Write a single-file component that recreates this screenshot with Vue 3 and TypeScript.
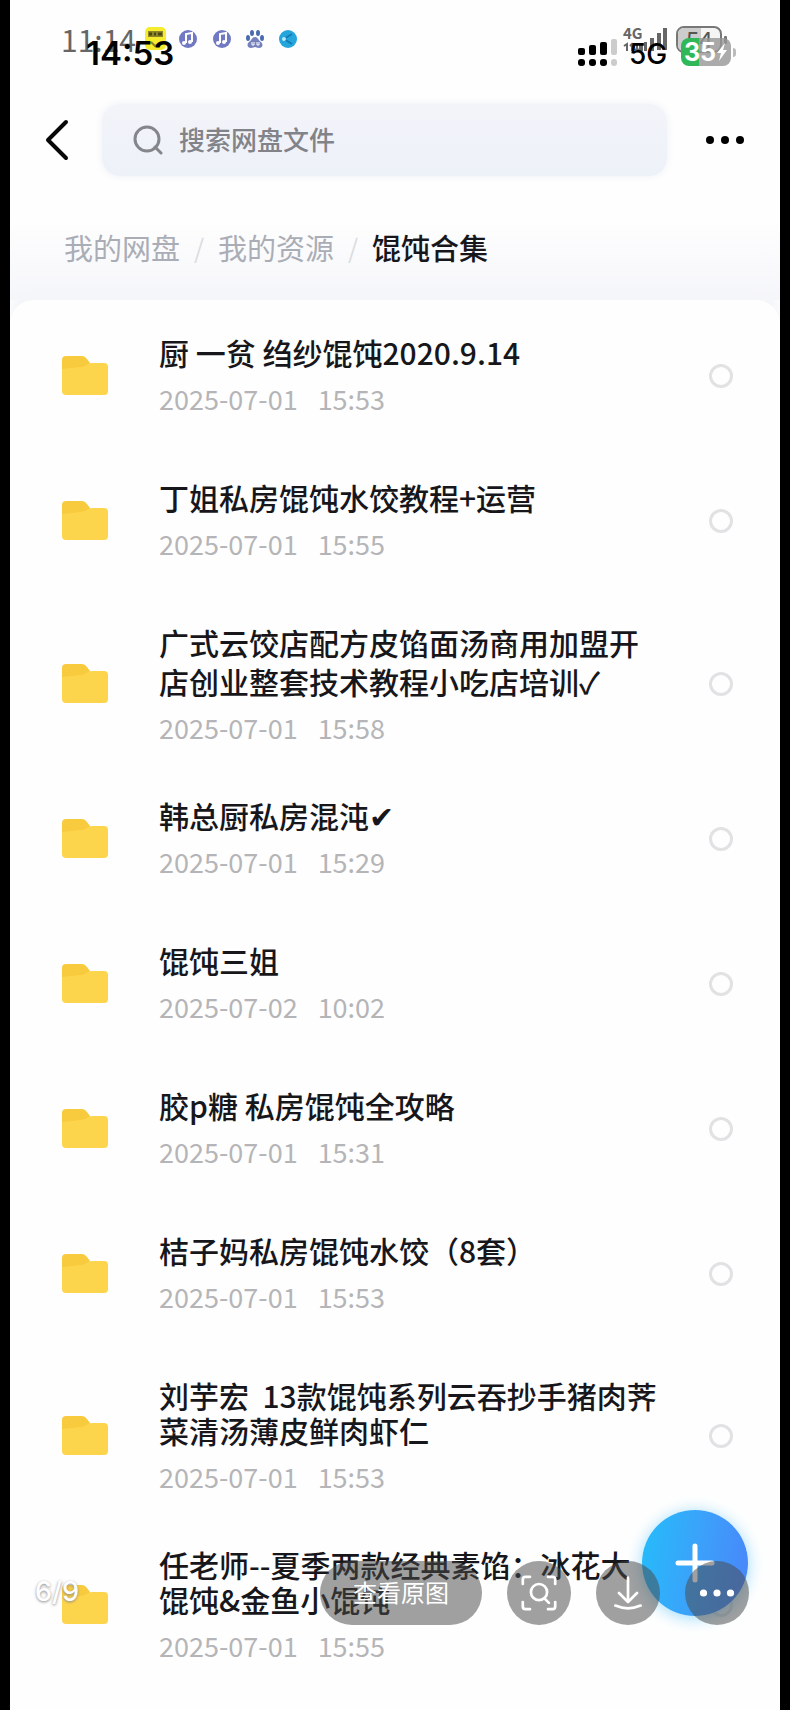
<script setup lang="ts">
import { ref } from 'vue'

interface Folder {
  lines: string[]
  date: string
  time: string
  variant: 'single' | 'tall' | 'tight'
}

const folders: Folder[] = [
  { lines: ['厨 一贫 绉纱馄饨2020.9.14'], date: '2025-07-01', time: '15:53', variant: 'single' },
  { lines: ['丁姐私房馄饨水饺教程+运营'], date: '2025-07-01', time: '15:55', variant: 'single' },
  { lines: ['广式云饺店配方皮馅面汤商用加盟开', '店创业整套技术教程小吃店培训✓'], date: '2025-07-01', time: '15:58', variant: 'tall' },
  { lines: ['韩总厨私房混沌✔'], date: '2025-07-01', time: '15:29', variant: 'single' },
  { lines: ['馄饨三姐'], date: '2025-07-02', time: '10:02', variant: 'single' },
  { lines: ['胶p糖 私房馄饨全攻略'], date: '2025-07-01', time: '15:31', variant: 'single' },
  { lines: ['桔子妈私房馄饨水饺（8套）'], date: '2025-07-01', time: '15:53', variant: 'single' },
  { lines: ['刘芋宏  13款馄饨系列云吞抄手猪肉荠', '菜清汤薄皮鲜肉虾仁'], date: '2025-07-01', time: '15:53', variant: 'tight' },
  { lines: ['任老师--夏季两款经典素馅：冰花大', '馄饨&金鱼小馄饨'], date: '2025-07-01', time: '15:55', variant: 'tight' },
]
const selected = ref<number[]>([])
const query = ref('')
</script>

<template>
  <div class="page">
    <div class="status">
      <div class="status-left">
        <span class="old-time">11:14</span>
        <svg class="app-icons" viewBox="0 0 160 28" aria-hidden="true">
          <rect x="2" y="2" width="21" height="23" rx="5" fill="#f4ec2c" />
          <path d="M5 6h15v6H5z" fill="#8d8428" />
          <path d="M6 9h3m2 0h2m2 0h4" stroke="#4d4914" stroke-width="3" fill="none" />
          <path d="M8 17l4 4 6-4" stroke="#8a8227" stroke-width="2" fill="none" />
          <g v-for="x in [45, 79]" :key="x">
            <circle :cx="x" cy="14" r="9" fill="#7178c4" />
            <path :d="`M${x - 2} 18V9l6-1v9`" stroke="#fff" stroke-width="2" fill="none" />
            <circle :cx="x - 4" cy="18" r="2" fill="#fff" />
            <circle :cx="x + 2" cy="17" r="2" fill="#fff" />
          </g>
          <g fill="#4a6cae">
            <ellipse cx="105" cy="13" rx="2" ry="3" />
            <ellipse cx="109" cy="8" rx="2" ry="3" />
            <ellipse cx="115" cy="8" rx="2" ry="3" />
            <ellipse cx="119" cy="13" rx="2" ry="3" />
            <path d="M112 12c3 0 3 3 6 5 3 3 1 6-2 6-2 0-3-1-4-1s-2 1-4 1c-3 0-5-3-2-6 3-2 3-5 6-5z" fill="#7580bd" />
            <path d="M109 17v3h2v-3m3 0v3h2v-3" stroke="#fff" fill="none" />
          </g>
          <circle cx="145" cy="14" r="9" fill="#24a5dc" />
          <path d="M149 9l-8 5 8 5" stroke="#127cb5" stroke-width="2" fill="none" />
          <circle cx="141" cy="14" r="2" fill="#b8eafa" />
        </svg>
      </div>
      <span class="new-time">14:53</span>
      <div class="signals">
        <svg class="signal-art" viewBox="0 0 180 60" aria-hidden="true">
          <g fill="#666">
            <rect x="69" y="29" width="4" height="7" />
            <rect x="74" y="27" width="3" height="9" />
            <rect x="80" y="23" width="4" height="13" />
            <rect x="87" y="18" width="4" height="17" />
            <rect x="93" y="13" width="4" height="22" />
            <path d="M54 31l3-2v7m5-7v7m-2-5l2-2 2 2m3-2v7m-2-2l2 2 2-2" stroke="#666" stroke-width="2" fill="none" />
          </g>
          <rect x="107" y="12" width="44" height="25" rx="7" fill="#f4f4f4" stroke="#777" stroke-width="2" />
          <path d="M114 13h17v23h-17q-6 0-6-6V19q0-6 6-6z" fill="#ccc" />
          <rect x="154" y="21" width="3" height="8" rx="1" fill="#777" />
          <g fill="#000">
            <rect x="8" y="33" width="7" height="7" rx="2" />
            <rect x="19" y="30" width="7" height="10" rx="2" />
            <rect x="30" y="27" width="7" height="13" rx="2" />
            <rect x="8" y="44" width="7" height="7" rx="3" />
            <rect x="19" y="44" width="7" height="7" rx="3" />
            <rect x="30" y="44" width="7" height="7" rx="3" />
          </g>
          <rect x="41" y="24" width="6" height="16" rx="2" fill="#ccc" />
          <rect x="41" y="44" width="6" height="7" rx="3" fill="#ccc" />
        </svg>
        <span class="net-old">4G</span>
        <span class="charge-old">54</span>
        <span class="net-new">5G</span>
        <span class="battery">
          <span>35</span>
          <svg viewBox="0 0 12 20" aria-hidden="true"><path d="M9 1L1 11h4l-2 8 8-11H7z" fill="#fff" /></svg>
        </span>
      </div>
    </div>

    <header class="top">
      <button class="plain back" aria-label="返回">
        <svg viewBox="0 0 24 42"><path d="M21 3L3 21l18 18" fill="none" stroke="#080808" stroke-width="4" stroke-linecap="round" stroke-linejoin="round" /></svg>
      </button>
      <label class="search">
        <svg viewBox="0 0 30 30" aria-hidden="true"><circle cx="14" cy="14" r="12" /><path d="M22 22l6 6" /></svg>
        <input v-model="query" type="text" placeholder="搜索网盘文件" aria-label="搜索网盘文件">
      </label>
      <button class="plain more" aria-label="更多">
        <svg viewBox="0 0 40 10"><circle cx="5" cy="5" r="4" /><circle cx="20" cy="5" r="4" /><circle cx="35" cy="5" r="4" /></svg>
      </button>
    </header>

    <nav class="crumbs">
      <a href="#">我的网盘</a><i>/</i><a href="#">我的资源</a><i>/</i><span>馄饨合集</span>
    </nav>

    <main class="list">
      <label v-for="(folder, index) in folders" :key="index" class="row" :class="folder.variant">
        <svg class="folder" viewBox="0 0 46 40" aria-hidden="true">
          <path d="M4 0h16q3 0 5 3l3 4v10H0V4q0-4 4-4z" fill="#f8cb3e" />
          <path d="M0 13q10-1 18-2 5 0 8-3 2-1 5-1h11q4 0 4 4v24q0 4-4 4H4q-4 0-4-4z" fill="#fdd54d" />
        </svg>
        <span class="info">
          <span class="name"><span v-for="line in folder.lines" :key="line">{{ line }}</span></span>
          <span class="date"><span>{{ folder.date }}</span><span>{{ folder.time }}</span></span>
        </span>
        <input v-model="selected" type="checkbox" :value="index">
      </label>
    </main>

    <button class="add" aria-label="新建">
      <svg viewBox="0 0 40 40"><path d="M20 3v34M3 20h34" stroke="#fff" stroke-width="5" stroke-linecap="round" /></svg>
    </button>

    <div class="viewer">
      <span class="counter">6/9</span>
      <button class="tool original">查看原图</button>
      <button class="tool" aria-label="识别图片">
        <svg viewBox="0 0 40 40"><path d="M2 10V5q0-3 3-3h5M30 2h5q3 0 3 3v5M38 30v5q0 3-3 3h-5M10 38H5q-3 0-3-3v-5M26 26l5 5" /><circle cx="20" cy="19" r="9" /></svg>
      </button>
      <button class="tool" aria-label="下载">
        <svg viewBox="0 0 40 40"><path d="M20 3v27M10 20l10 10 10-10M6 34q14 6 28 0" /></svg>
      </button>
      <button class="tool" aria-label="更多操作">
        <svg viewBox="0 0 40 40"><g fill="#fff" stroke="none"><circle cx="5" cy="20" r="4" /><circle cx="20" cy="20" r="4" /><circle cx="35" cy="20" r="4" /></g></svg>
      </button>
    </div>
  </div>
</template>

<style>
body {
  margin: 0;
  background: #000;
}
</style>

<style scoped>
.page {
  position: relative;
  box-sizing: border-box;
  overflow: hidden;
  min-height: 100vh;
  margin: 0 10px;
  background: #fefefe;
  color: #17171b;
  font-family: "Noto Sans CJK SC", sans-serif;
}
button {
  border: 0;
  padding: 0;
  font-family: inherit;
}
svg {
  display: block;
}
.status {
  position: relative;
  height: 96px;
}
.status-left {
  position: absolute;
  left: 51px;
  top: 21px;
  display: flex;
  align-items: center;
  height: 36px;
}
.old-time {
  width: 82px;
  font-size: 30px;
  line-height: 36px;
  color: #666;
}
.app-icons {
  width: 160px;
  height: 28px;
}
.new-time {
  position: absolute;
  left: 76px;
  top: 33px;
  font: 600 33px/40px Inter, sans-serif;
  color: #000;
}
.signals {
  position: absolute;
  right: 30px;
  top: 15px;
  width: 180px;
  height: 60px;
}
.signal-art {
  width: 180px;
  height: 60px;
}
.net-old,
.net-new,
.charge-old,
.battery {
  position: absolute;
}
.net-old {
  left: 53px;
  top: 9px;
  font: 700 15px/18px "Noto Sans CJK SC", sans-serif;
  color: #666;
}
.net-new {
  left: 59px;
  top: 23px;
  font: 500 28px/32px Inter, sans-serif;
  color: #000;
}
.charge-old {
  left: 116px;
  top: 10px;
  font-size: 24px;
  line-height: 28px;
  color: #555;
}
.battery {
  left: 111px;
  top: 23px;
  display: flex;
  align-items: center;
  justify-content: center;
  width: 50px;
  height: 28px;
  border-radius: 8px;
  background: linear-gradient(90deg, #30b858 36%, rgba(150, 150, 150, 0.8) 36%);
  color: #fff;
  font: 700 25px/28px Inter, sans-serif;
}
.battery::after {
  content: "";
  position: absolute;
  left: 52px;
  top: 10px;
  width: 3px;
  height: 9px;
  border-radius: 0 3px 3px 0;
  background: #bbb;
}
.battery svg {
  width: 12px;
  height: 20px;
}
.top {
  display: flex;
  align-items: center;
  height: 88px;
  padding: 0 35px;
}
.plain {
  background: none;
}
.back svg {
  width: 24px;
  height: 42px;
}
.search {
  display: flex;
  flex: 1;
  align-items: center;
  gap: 16px;
  height: 72px;
  margin: 0 38px 0 33px;
  padding-left: 31px;
  border-radius: 18px;
  background: linear-gradient(#f3f4fa, #edf1f8);
  box-shadow: 0 0 8px #eef0f6;
}
.search svg {
  width: 30px;
  height: 30px;
  fill: none;
  stroke: #85868c;
  stroke-width: 3;
  stroke-linecap: round;
}
.search input {
  flex: 1;
  min-width: 0;
  border: 0;
  padding: 0 0 2px;
  outline: 0;
  background: none;
  font: 500 26px/36px "Noto Sans CJK SC", sans-serif;
  color: #333;
}
.search input::placeholder {
  color: #828389;
  opacity: 1;
}
.more svg {
  width: 40px;
  height: 10px;
}
.crumbs {
  display: flex;
  align-items: center;
  height: 86px;
  padding: 20px 54px 10px;
  background: linear-gradient(#fefefe 30%, #f5f6fa);
  font-size: 29px;
  line-height: 44px;
}
.crumbs a {
  color: #aaadb5;
  text-decoration: none;
}
.crumbs i {
  width: 38px;
  text-align: center;
  font-style: normal;
  font-size: 26px;
  color: #dcdde2;
}
.crumbs span {
  font-weight: 500;
}
.list {
  padding-top: 2px;
  border-radius: 24px 24px 0 0;
  background: #fefefe;
  box-shadow: 0 -12px 8px #f5f6fa;
}
.row {
  display: flex;
  align-items: center;
  padding: 31px 47px 29px 52px;
}
.row.tall {
  padding-bottom: 20px;
}
.row.tight {
  padding-top: 33px;
  padding-bottom: 21px;
}
.folder {
  width: 46px;
  height: 40px;
  flex: none;
}
.info {
  flex: 1;
  display: flex;
  flex-direction: column;
  gap: 13px;
  margin-left: 51px;
  padding-bottom: 6px;
}
.tall .info {
  padding-bottom: 4px;
}
.name {
  display: flex;
  flex-direction: column;
  font-size: 30px;
  font-weight: 500;
  line-height: 39px;
  white-space: pre;
}
.tight .name {
  line-height: 35px;
}
.tight .info {
  gap: 15px;
  padding-bottom: 3px;
}
.date {
  display: flex;
  gap: 20px;
  font-size: 27px;
  line-height: 27px;
  color: #b5b5b8;
}
.row input {
  appearance: none;
  flex: none;
  width: 24px;
  height: 24px;
  margin: 0;
  border: 3px solid #e2e2e5;
  border-radius: 50%;
}
.row input:checked {
  background: #2b9cf5;
}
.add {
  position: absolute;
  right: 32px;
  bottom: 94px;
  display: grid;
  place-items: center;
  width: 106px;
  height: 106px;
  border-radius: 50%;
  background: linear-gradient(100deg, #24bdfa, #3ba2fa 50%, #4a84fa);
  box-shadow: 0 2px 16px #9ddcfc;
}
.add svg {
  width: 40px;
  height: 40px;
}
.viewer {
  position: absolute;
  right: 31px;
  bottom: 85px;
  left: 25px;
  display: flex;
  align-items: center;
  gap: 25px;
}
.counter {
  margin-right: auto;
  padding-bottom: 2px;
  font: 500 27px/36px Inter, sans-serif;
  color: #fff;
  text-shadow: 0 1px 3px #888;
}
.tool {
  display: grid;
  place-items: center;
  width: 64px;
  height: 64px;
  border-radius: 32px;
  background: rgba(72, 72, 72, 0.52);
  color: #fff;
}
.original {
  width: 162px;
  padding-bottom: 3px;
  font-size: 24px;
}
.tool svg {
  width: 36px;
  height: 36px;
  fill: none;
  stroke: #fff;
  stroke-width: 3;
  stroke-linecap: round;
  stroke-linejoin: round;
}
</style>
